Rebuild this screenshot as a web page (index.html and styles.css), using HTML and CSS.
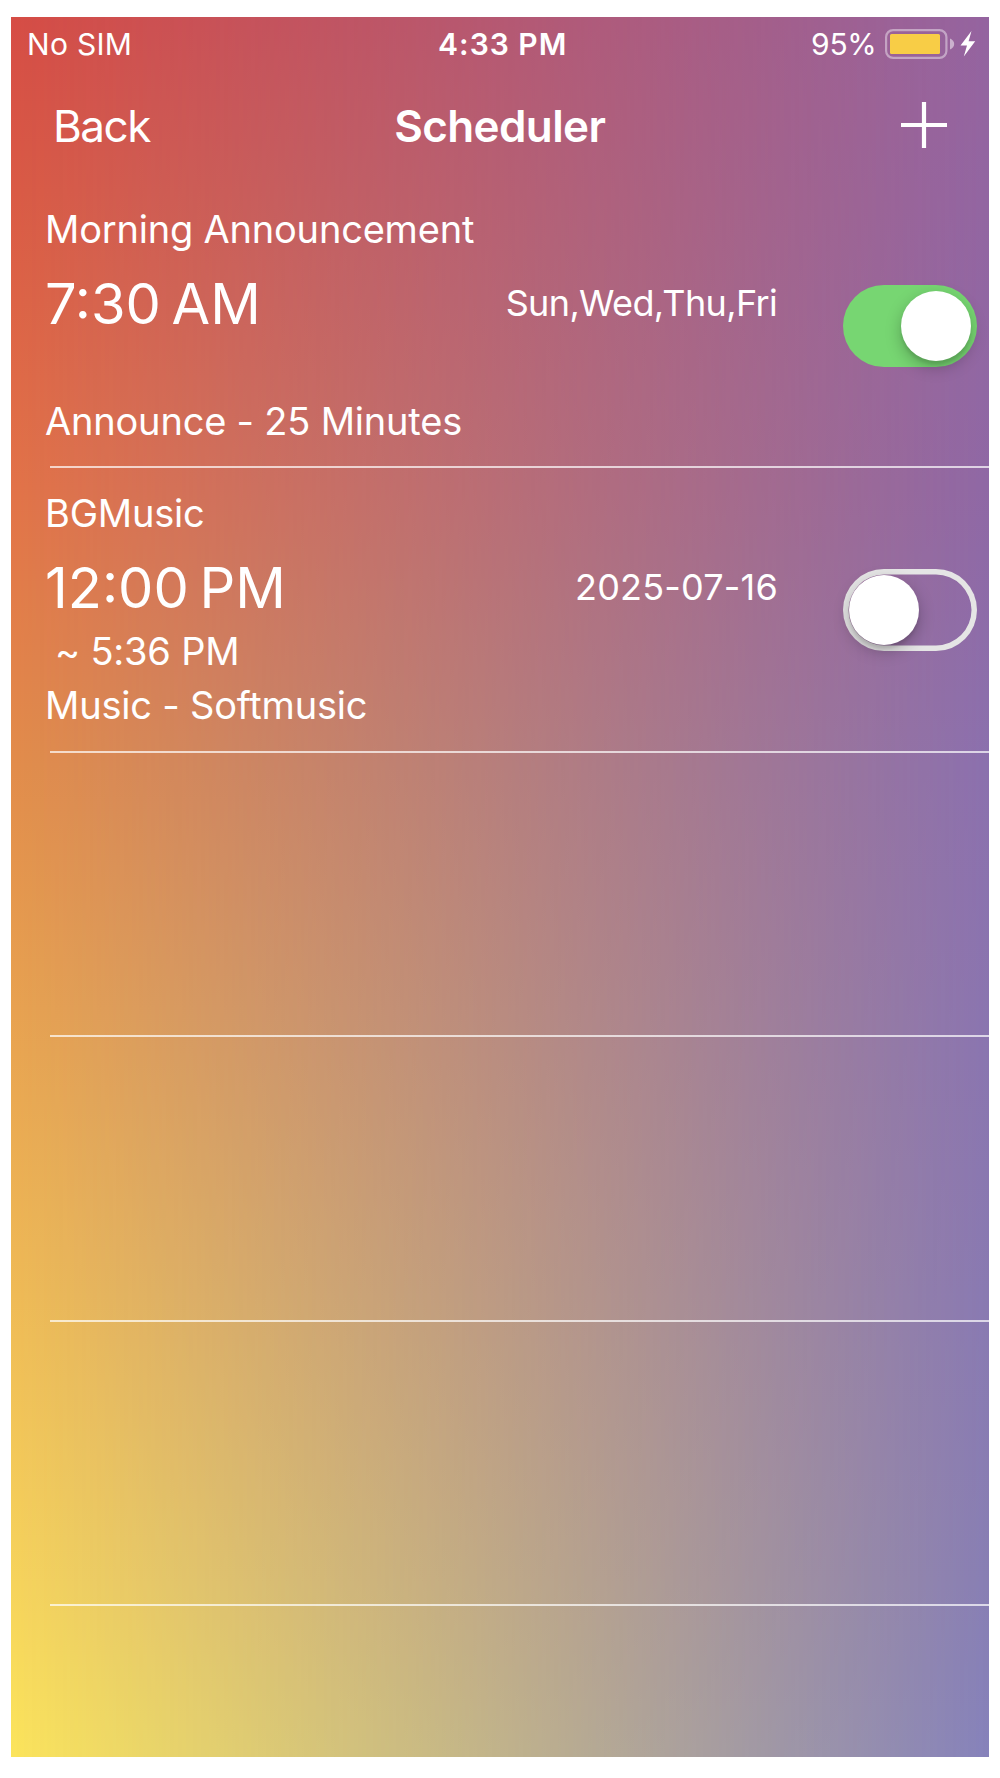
FILE: index.html
```
<!DOCTYPE html>
<html lang="en">
<head>
    <title>Scheduler</title>
    <meta name="viewport" content="width=device-width, initial-scale=1" charset="UTF-8">
    <link rel="stylesheet" href="styles.css">
</head>
<body>
<main class="screen">
    <div class="status-bar">
        <span class="carrier">No SIM</span>
        <span class="clock">4:33 PM</span>
        <div class="power">
            <span class="percent">95%</span>
            <svg class="battery" width="70" height="30" viewBox="0 0 70 30">
                <rect x="1.1" y="1.1" width="60.3" height="27.8" rx="7" fill="none" stroke="#fff" stroke-opacity=".42" stroke-width="2.2"/>
                <rect x="5" y="5" width="50" height="20" rx="1.5" fill="#f8cd46"/>
                <path d="M65 9.500C67.600 10.500 69.200 12.500 69.200 15S67.600 19.500 65 20.500Z" fill="#fff" fill-opacity=".5"/>
            </svg>
            <svg class="bolt" width="16" height="26" viewBox="0 0 16 26">
                <path d="M11.500 0L.5 14.500H7L3.800 25.500L15.200 10.300H8.600Z" fill="#fff"/>
            </svg>
        </div>
    </div>
    <header class="nav-bar">
        <a class="back" href="#">Back</a>
        <h1 class="title">Scheduler</h1>
        <a class="add" href="#" aria-label="Add">
            <svg width="46" height="46" viewBox="0 0 46 46">
                <path d="M0 23H46M23 0V46" stroke="#fff" stroke-width="4.200"/>
            </svg>
        </a>
    </header>
    <ul class="schedule">
        <li class="row">
            <div class="info">
                <div class="name">Morning Announcement</div>
                <div class="when">
                    <span class="time">7:30 AM</span>
                    <span class="days">Sun,Wed,Thu,Fri</span>
                </div>
                <div class="until"></div>
                <div class="action">Announce - 25 Minutes</div>
            </div>
            <div class="switch on"><span class="knob"></span></div>
        </li>
        <li class="row">
            <div class="info">
                <div class="name">BGMusic</div>
                <div class="when">
                    <span class="time">12:00 PM</span>
                    <span class="days date">2025-07-16</span>
                </div>
                <div class="until">~ 5:36 PM</div>
                <div class="action">Music - Softmusic</div>
            </div>
            <div class="switch"><span class="knob"></span></div>
        </li>
        <li class="row"></li>
        <li class="row"></li>
        <li class="row"></li>
    </ul>
</main>
</body>
</html>
```
FILE: styles.css
```
* {
    box-sizing: border-box;
}

body {
    margin: 0;
    padding: 17px 11px 21px;
    background: white;
    color: white;
    font-family: Inter, "Liberation Sans", sans-serif;
}

.screen {
    position: relative;
    z-index: 0;
    width: 977.5px;
    height: 1740px;
    overflow: hidden;
    background: linear-gradient(#d64d45, #da5b45 10%, #e27348 27%, #e28d4b 43%, #f6d45c 90%, #fbe45c);
}

/* cool side of the background, fades in from the left */
.screen::before {
    content: "";
    position: absolute;
    z-index: -1;
    inset: 0;
    background: linear-gradient(#9464a0, #8f68a5 27%, #8b70ae 43%, #887eb4 90%, #8682bb);
    -webkit-mask-image: linear-gradient(to right, transparent, black);
    mask-image: linear-gradient(to right, transparent, black);
}

.status-bar {
    display: grid;
    grid-template-columns: 1fr auto 1fr;
    align-items: center;
    height: 54px;
    padding: 0 13px 0 16px;
    font-size: 30px;
}

.carrier {
    letter-spacing: 0.3px;
}

.clock {
    padding-left: 3px;
    font-weight: 600;
    letter-spacing: 1px;
}

.power {
    display: flex;
    justify-content: flex-end;
    align-items: center;
}

.battery {
    margin-left: 8px;
}

.bolt {
    margin-left: 5px;
}

.percent {
    letter-spacing: -0.3px;
}

.nav-bar {
    display: grid;
    grid-template-columns: 1fr auto 1fr;
    align-items: center;
    height: 110px;
    margin-bottom: 3px;
    padding: 0 42px 0 42px;
    font-size: 44px;
}

.nav-bar a {
    color: white;
    text-decoration: none;
}

.back {
    letter-spacing: -1.5px;
}

.title {
    margin: 0;
    font-size: 44px;
    font-weight: 600;
    letter-spacing: -0.6px;
}

.add {
    justify-self: end;
    display: flex;
    margin-bottom: 2px;
}

.schedule {
    margin: 0;
    padding: 0;
    list-style: none;
}

.row {
    display: flex;
    height: 284.4px;
    padding: 22px 11px 0 34px;
    background: linear-gradient(rgba(255, 255, 255, 0.7), rgba(255, 255, 255, 0.7)) 39px 100% / 100% 2px no-repeat;
}

.info {
    flex: none;
    width: 732px;
    font-size: 38px;
    letter-spacing: -0.2px;
    white-space: nowrap;
}

.name {
    height: 46px;
    line-height: 46px;
}

.when {
    display: flex;
    justify-content: space-between;
    height: 92px;
}

.time {
    font-size: 56px;
    line-height: 105px;
    letter-spacing: 0;
    word-spacing: -5px;
}

.days {
    font-size: 36px;
    line-height: 102px;
    letter-spacing: -0.65px;
}

.date {
    margin-right: -1px;
    letter-spacing: 0.2px;
}

.until {
    height: 54px;
    padding-left: 10px;
    line-height: 46px;
    letter-spacing: -0.2px;
}

.action {
    line-height: 46px;
}

.switch {
    flex: none;
    width: 134px;
    height: 82px;
    margin: 79px 0 0 65.5px;
    padding: 6px;
    border-radius: 41px;
    box-shadow: inset 0 0 0 5.5px #e5e5e5;
}

.knob {
    display: block;
    width: 70px;
    height: 70px;
    border-radius: 50%;
    background: white;
    box-shadow: 0 6px 16px rgba(0, 0, 0, 0.25), 0 4px 3px rgba(0, 0, 0, 0.08);
}

.switch.on {
    background: #77d672;
    box-shadow: none;
}

.switch.on .knob {
    margin-left: auto;
}
```
